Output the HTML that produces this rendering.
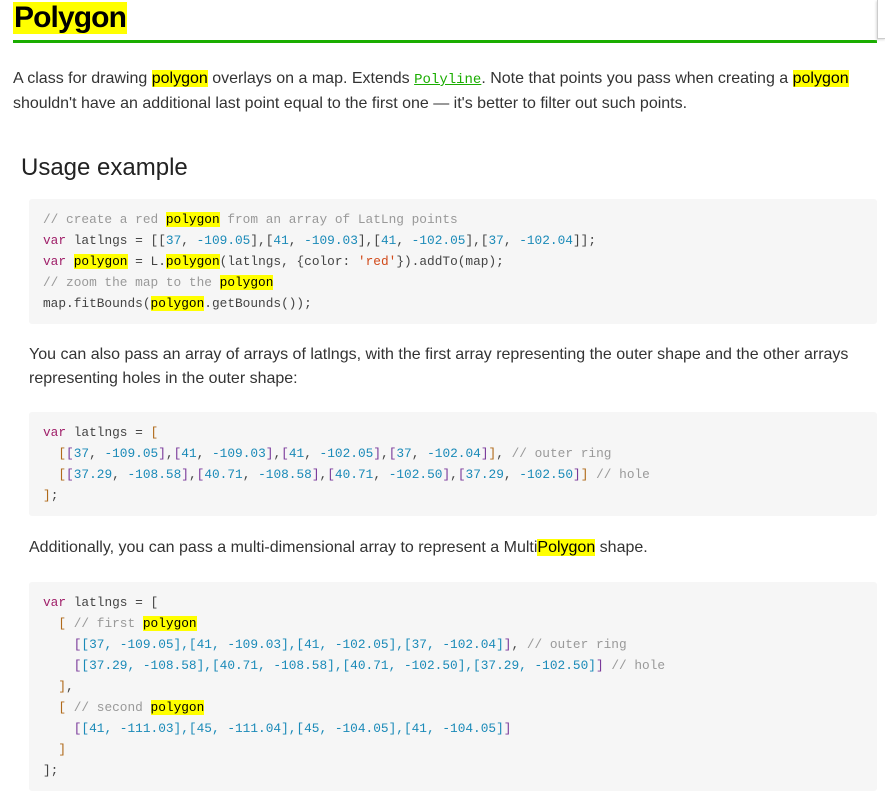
<!DOCTYPE html>
<html><head><meta charset="utf-8"><style>
body{margin:0;background:#fff;font-family:"Liberation Sans",Arial,sans-serif;color:#333;width:885px;height:794px;overflow:hidden;position:relative}
h1{position:absolute;left:13px;top:2px;margin:0;font-size:30px;line-height:32px;font-weight:bold;background:#ff0;color:#000;padding:0 1px;letter-spacing:-0.9px}
.rule{position:absolute;left:13px;top:40px;width:864px;height:3px;background:#1aad00}
.sb{position:absolute;left:877px;top:0;width:8px;height:38px;border-left:1px solid #ccc;border-bottom:1px solid #ccc;box-shadow:-1px 1px 2px #ddd}
p{position:absolute;margin:0;font-size:16px;line-height:24px;color:#333}
h2{position:absolute;left:21px;top:152px;margin:0;font-size:24px;font-weight:normal;color:#222;line-height:32px}
m{background:#ff0;color:#000}
pre{position:absolute;left:29px;width:820px;margin:0;padding:10px 14px;background:#f6f6f6;border-radius:3px;font-family:"Liberation Mono",monospace;font-size:12.8px;line-height:21px;color:#444}
.c{color:#999}.k{color:#a0206a}.n{color:#1a8ab8}.s{color:#d14a1a}.o{color:#b06a1a}.p{color:#7a3a9a}
a{color:#1aad00;font-family:"Liberation Mono",monospace;font-size:14px;text-decoration:underline}
</style></head><body>
<h1>Polygon</h1><div class="rule"></div><div class="sb"></div>
<p style="left:13px;top:67px;width:860px">A class for drawing <m>polygon</m> overlays on a map. Extends <a>Polyline</a>. Note that points you pass when creating a <m>polygon</m> shouldn't have an additional last point equal to the first one — it's better to filter out such points.</p>
<h2>Usage example</h2>
<pre style="top:199px"><span class="c">// create a red <m>polygon</m> from an array of LatLng points</span>
<span class="k">var</span> latlngs = [[<span class="n">37</span>, <span class="n">-109.05</span>],[<span class="n">41</span>, <span class="n">-109.03</span>],[<span class="n">41</span>, <span class="n">-102.05</span>],[<span class="n">37</span>, <span class="n">-102.04</span>]];
<span class="k">var</span> <m>polygon</m> = L.<m>polygon</m>(latlngs, {color: <span class="s">'red'</span>}).addTo(map);
<span class="c">// zoom the map to the <m>polygon</m></span>
map.fitBounds(<m>polygon</m>.getBounds());</pre>
<p style="left:29px;top:343px;width:840px">You can also pass an array of arrays of latlngs, with the first array representing the outer shape and the other arrays representing holes in the outer shape:</p>
<pre style="top:412px"><span class="k">var</span> latlngs = <span class="o">[</span>
  <span class="o">[</span><span class="p">[</span><span class="n">37</span>, <span class="n">-109.05</span><span class="p">]</span>,<span class="p">[</span><span class="n">41</span>, <span class="n">-109.03</span><span class="p">]</span>,<span class="p">[</span><span class="n">41</span>, <span class="n">-102.05</span><span class="p">]</span>,<span class="p">[</span><span class="n">37</span>, <span class="n">-102.04</span><span class="p">]</span><span class="o">]</span>, <span class="c">// outer ring</span>
  <span class="o">[</span><span class="p">[</span><span class="n">37.29</span>, <span class="n">-108.58</span><span class="p">]</span>,<span class="p">[</span><span class="n">40.71</span>, <span class="n">-108.58</span><span class="p">]</span>,<span class="p">[</span><span class="n">40.71</span>, <span class="n">-102.50</span><span class="p">]</span>,<span class="p">[</span><span class="n">37.29</span>, <span class="n">-102.50</span><span class="p">]</span><span class="o">]</span> <span class="c">// hole</span>
<span class="o">]</span>;</pre>
<p style="left:29px;top:536px">Additionally, you can pass a multi-dimensional array to represent a Multi<m>Polygon</m> shape.</p>
<pre style="top:582px"><span class="k">var</span> latlngs = [
  <span class="o">[</span> <span class="c">// first <m>polygon</m></span>
    <span class="p">[</span><span class="n">[37, -109.05],[41, -109.03],[41, -102.05],[37, -102.04]</span><span class="p">]</span>, <span class="c">// outer ring</span>
    <span class="p">[</span><span class="n">[37.29, -108.58],[40.71, -108.58],[40.71, -102.50],[37.29, -102.50]</span><span class="p">]</span> <span class="c">// hole</span>
  <span class="o">]</span>,
  <span class="o">[</span> <span class="c">// second <m>polygon</m></span>
    <span class="p">[</span><span class="n">[41, -111.03],[45, -111.04],[45, -104.05],[41, -104.05]</span><span class="p">]</span>
  <span class="o">]</span>
];</pre>
</body></html>
